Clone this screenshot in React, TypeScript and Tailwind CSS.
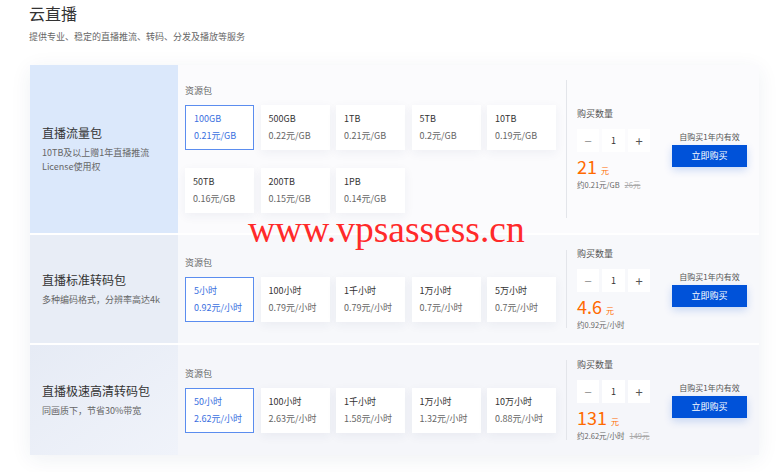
type Pack = { name: string; price: string };

type Product = {
    title: string;
    desc: string[];
    packs: Pack[];
    amount: string;
    unit: string;
    original?: string;
    leftBg: string;
    rightBg: string;
    height: string;
};

const products: Product[] = [
    {
        title: '直播流量包',
        desc: ['10TB及以上赠1年直播推流', 'License使用权'],
        packs: [
            { name: '100GB', price: '0.21元/GB' },
            { name: '500GB', price: '0.22元/GB' },
            { name: '1TB', price: '0.21元/GB' },
            { name: '5TB', price: '0.2元/GB' },
            { name: '10TB', price: '0.19元/GB' },
            { name: '50TB', price: '0.16元/GB' },
            { name: '200TB', price: '0.15元/GB' },
            { name: '1PB', price: '0.14元/GB' },
        ],
        amount: '21',
        unit: '约0.21元/GB',
        original: '26元',
        leftBg: 'bg-[#dbe8fb]',
        rightBg: 'bg-[#fbfbfd]',
        height: 'h-[168px]',
    },
    {
        title: '直播标准转码包',
        desc: ['多种编码格式，分辨率高达4k'],
        packs: [
            { name: '5小时', price: '0.92元/小时' },
            { name: '100小时', price: '0.79元/小时' },
            { name: '1千小时', price: '0.79元/小时' },
            { name: '1万小时', price: '0.7元/小时' },
            { name: '5万小时', price: '0.7元/小时' },
        ],
        amount: '4.6',
        unit: '约0.92元/小时',
        leftBg: 'bg-[#e8edf6]',
        rightBg: 'bg-[#f7f8fb]',
        height: 'h-[108px]',
    },
    {
        title: '直播极速高清转码包',
        desc: ['同画质下，节省30%带宽'],
        packs: [
            { name: '50小时', price: '2.62元/小时' },
            { name: '100小时', price: '2.63元/小时' },
            { name: '1千小时', price: '1.58元/小时' },
            { name: '1万小时', price: '1.32元/小时' },
            { name: '10万小时', price: '0.88元/小时' },
        ],
        amount: '131',
        unit: '约2.62元/小时',
        original: '149元',
        leftBg: 'bg-gradient-to-br from-[#e6ebf5] to-[#f0f3fa]',
        rightBg: 'bg-[#f5f6fa]',
        height: 'h-[110px]',
    },
];

function PackCard({ pack, active }: { pack: Pack; active: boolean }) {
    return (
        <div
            className={`flex h-[45px] w-[69px] flex-col justify-center gap-[5px] pl-[8px] text-[9px] leading-[12px] ${
                active
                    ? 'border border-[#5b8def] bg-white text-[#3a6fe0]'
                    : 'bg-white shadow-[0_3px_10px_rgba(30,50,100,0.06)]'
            }`}
        >
            <span className={active ? '' : 'text-[#333]'}>{pack.name}</span>
            <span className={active ? '' : 'text-[#666]'}>{pack.price}</span>
        </div>
    );
}

function Purchase({ product }: { product: Product }) {
    return (
        <div className="flex flex-col pl-[10px]">
            <span className="text-[9px] leading-[12px] text-[#555]">购买数量</span>
            <div className="mt-[9px] flex">
                <div className="flex w-[73px] shrink-0 flex-col">
                    <div className="flex gap-[3px]">
                        <div className="flex h-[23px] w-[22px] items-center justify-center bg-white text-[13px] text-[#999]">
                            −
                        </div>
                        <div className="flex h-[23px] w-[23px] items-center justify-center bg-white text-[9px] text-[#333]">
                            1
                        </div>
                        <div className="flex h-[23px] w-[22px] items-center justify-center bg-white text-[13px] text-[#555]">
                            +
                        </div>
                    </div>
                    <div className="mt-[2px] flex items-baseline text-[#ff6a00]">
                        <span className="text-[18px] leading-[24px]">{product.amount}</span>
                        <span className="ml-[4px] text-[8px]">元</span>
                    </div>
                    <div className="mt-[1px] flex whitespace-nowrap text-[7.5px] leading-[11px] text-[#666]">
                        <span>{product.unit}</span>
                        {product.original && (
                            <span className="ml-[5px] text-[#aaa] line-through">{product.original}</span>
                        )}
                    </div>
                </div>
                <div className="ml-[22px] mt-[3px] flex flex-col items-center">
                    <span className="text-[8px] leading-[10px] text-[#555]">自购买1年内有效</span>
                    <button className="mt-[3px] h-[22px] w-[75px] bg-[#0052d9] text-[9px] text-white shadow-[0_3px_8px_rgba(0,82,217,0.2)]">
                        立即购买
                    </button>
                </div>
            </div>
        </div>
    );
}

function ProductRow({ product }: { product: Product }) {
    return (
        <div className={`flex ${product.height}`}>
            <div className={`flex w-[148px] flex-col justify-center pl-[12px] ${product.leftBg}`}>
                <span className="text-[12px] leading-[16px] text-[#333]">{product.title}</span>
                <div className="mt-[5px] flex flex-col text-[9px] leading-[14px] text-[#666]">
                    {product.desc.map((d) => (
                        <span key={d}>{d}</span>
                    ))}
                </div>
            </div>
            <div className={`flex flex-1 items-center ${product.rightBg}`}>
                <div className="flex w-[388px] flex-col pl-[7px]">
                    <span className="text-[9px] leading-[12px] text-[#666]">资源包</span>
                    <div className="mt-[8px] grid grid-cols-[repeat(5,69px)] gap-x-[6.5px] gap-y-[18px]">
                        {product.packs.map((p, i) => (
                            <PackCard key={p.name} pack={p} active={i === 0} />
                        ))}
                    </div>
                </div>
                <div className="h-[calc(100%-30px)] w-px bg-[#e3e5ea]" />
                <Purchase product={product} />
            </div>
        </div>
    );
}

export default function App() {
    return (
        <div
            className="relative h-[472px] w-[780px] overflow-hidden bg-white"
            style={{ fontFamily: '"Noto Sans CJK SC", "Noto Sans", sans-serif' }}
        >
            <div className="px-[29px] pt-[2px]">
                <h1 className="text-[16px] leading-[22px] text-[#333]">云直播</h1>
                <p className="mt-[7px] text-[9px] leading-[12px] text-[#666]">
                    提供专业、稳定的直播推流、转码、分发及播放等服务
                </p>
            </div>
            <div className="ml-[30px] mt-[22px] flex w-[729px] flex-col gap-[2px] bg-white shadow-[0_4px_20px_rgba(30,50,100,0.07)]">
                {products.map((p) => (
                    <ProductRow key={p.title} product={p} />
                ))}
            </div>
            <div
                className="absolute left-[248px] top-[211px] text-[37.5px] leading-none text-[#ff2a2a]"
                style={{ fontFamily: '"Liberation Serif", serif' }}
            >
                www.vpsassess.cn
            </div>
        </div>
    );
}
